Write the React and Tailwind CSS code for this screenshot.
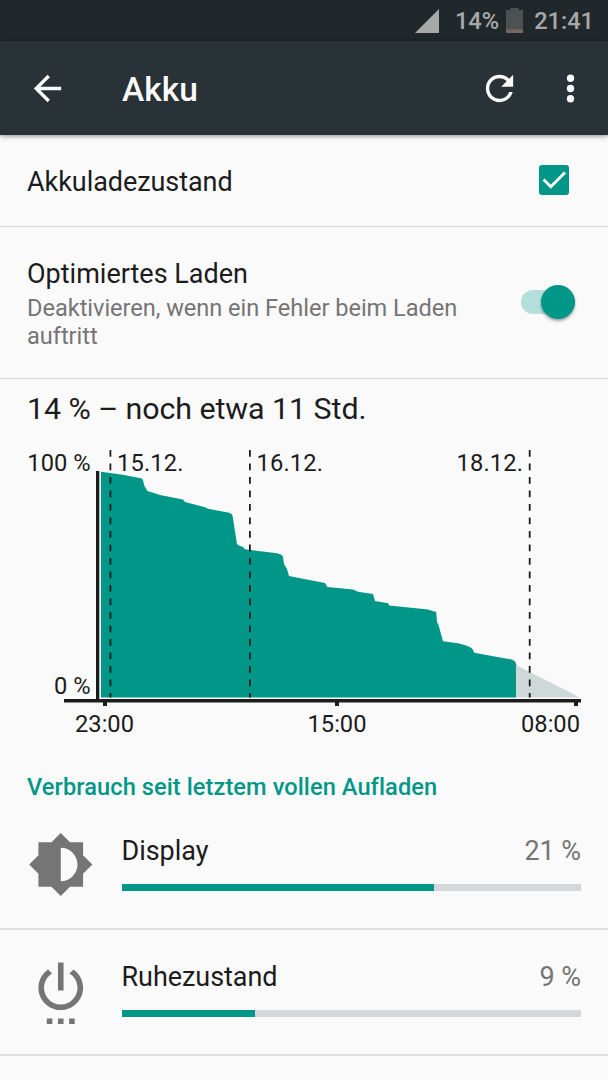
import React, { useState } from "react";

const GRAPH_LEVEL =
  "M101 697.4V471.8L121 474.5L141 478.3Q143.3 479 143.4 482L144.5 486L147.5 491L160 495L183 499.5L185 502L205 507.3L208 508.8L228 512.6Q232 513.6 232.6 516L237 544L239 545.5L243 547L245 549.3L277 553.3Q282.5 554.5 283 557L284 564L287 569L289 576L304 579L325 583L327.3 587L353 589.6L358 591.7L373 594L375 601L388.3 603.3L389 605.5L428 609.5L436.2 612L437 622L438.5 625L443 641.2L458 643.3Q471 646.5 472.5 649L474.3 652.7L500 657.5L511 659.3Q515 660.5 516 663.5V697.4Z";

const verbraucher = [
  {
    name: "Display",
    value: "21 %",
    width: 68,
    icon: "M20 15.31L23.31 12 20 8.69V4h-4.69L12 .69 8.69 4H4v4.69L.69 12 4 15.31V20h4.69L12 23.31 15.31 20H20v-4.69zM12 18V6c3.31 0 6 2.69 6 6s-2.69 6-6 6z",
  },
  {
    name: "Ruhezustand",
    value: "9 %",
    width: 29,
    icon: "M7 24h2v-2H7v2zm4 0h2v-2h-2v2zm2-22h-2v10h2V2zm3.56 2.44l-1.45 1.45C16.84 6.94 18 8.83 18 11c0 3.31-2.69 6-6 6s-6-2.69-6-6c0-2.17 1.16-4.06 2.88-5.12L7.44 4.44C5.36 5.88 4 8.28 4 11c0 4.42 3.58 8 8 8s8-3.58 8-8c0-2.72-1.36-5.12-3.44-6.56zM15 24h2v-2h-2v2z",
  },
];

const StatusBar = () => (
  <div className="flex h-[41px] items-center justify-end bg-[#21282b] pr-[14px] text-[23.6px] leading-[41px] font-medium text-[#a7a9a9]">
    <svg className="mr-[16px] h-6 w-6" viewBox="0 0 24 24" fill="currentColor">
      <path d="M24 0v24H0z" />
    </svg>
    <span className="pt-[2px]">14%</span>
    <svg className="mr-[11px] ml-[7px] h-[25px] w-[17px]" viewBox="0 0 17 25">
      <path d="M4.5 0h8v2H17v23H0V2h4.5z" fill="#4d5152" />
      <path d="M0 21.5h17V25H0z" fill="#756763" />
    </svg>
    <span className="pt-[2px]">21:41</span>
  </div>
);

const Toolbar = () => (
  <header className="relative flex h-[94px] items-center bg-[#283237] pl-[27px] text-[#fafafa] shadow-[0_1px_5px_rgba(0,0,0,0.45)]">
    <button className="mr-[54px]">
      <svg className="h-[41px] w-[41px]" viewBox="0 0 24 24" fill="currentColor">
        <path d="M20 11H7.83l5.59-5.59L12 4l-8 8 8 8 1.41-1.41L7.83 13H20v-2z" />
      </svg>
    </button>
    <h1 className="flex-1 pt-[3px] text-[33.5px] leading-10 font-medium">Akku</h1>
    <button className="mr-[30px]">
      <svg className="h-[41px] w-[41px]" viewBox="0 0 24 24" fill="currentColor">
        <path d="M17.65 6.35C16.2 4.9 14.21 4 12 4c-4.42 0-7.99 3.58-7.99 8s3.57 8 7.99 8c3.73 0 6.84-2.55 7.73-6h-2.08c-.82 2.33-3.04 4-5.65 4-3.31 0-6-2.69-6-6s2.69-6 6-6c1.66 0 3.14.69 4.22 1.78L13 11h7V4l-2.35 2.35z" />
      </svg>
    </button>
    <button className="mr-[17px]">
      <svg className="h-[41px] w-[41px]" viewBox="0 0 24 24" fill="currentColor">
        <circle cx="12" cy="6" r="2.15" />
        <circle cx="12" cy="12" r="2.15" />
        <circle cx="12" cy="18" r="2.15" />
      </svg>
    </button>
  </header>
);

// Akkuverlauf mit Prognose
const BatteryGraph = () => (
  <svg
    className="h-[304px] w-[608px]"
    viewBox="0 440 608 304"
    fontSize="23.7"
    fill="#1c1c1c"
  >
    <path d={GRAPH_LEVEL} fill="#009688" />
    <path d="M516 665L580 697.4H516Z" fill="#cfd8d8" />
    <circle cx="515.7" cy="664.7" r="1" fill="#8d7878" />
    <path d="M96 471h3.3v228H96zM64 699h517v3.4H64z" />
    <path d="M103 702h4v4h-4zM335 702h4v4h-4zM574 702h4v4h-4z" />
    <path
      d="M110.4 450V697.4M249.9 450V697.4M529.7 450V697.4"
      stroke="#1c1c1c"
      strokeWidth="1.8"
      strokeDasharray="6.8 6.7"
    />
    <text x="90.5" y="471" textAnchor="end">100 %</text>
    <text x="90.5" y="694" textAnchor="end">0 %</text>
    <text x="117" y="471" textLength="66.5">15.12.</text>
    <text x="256.5" y="471" textLength="66.5">16.12.</text>
    <text x="523" y="471" textAnchor="end" textLength="66.5">18.12.</text>
    <text x="104.5" y="732" textAnchor="middle">23:00</text>
    <text x="337" y="732" textAnchor="middle">15:00</text>
    <text x="580" y="732" textAnchor="end">08:00</text>
  </svg>
);

const UsageRow = ({ item }) => (
  <li className="flex h-[126px] items-start border-b-2 border-[#e0e0e0] pr-[27px] pl-[27px]">
    <svg className="mt-[27px] mr-[27px] h-[67px] w-[67.5px]" viewBox="0 0 24 24" fill="#757575">
      <path d={item.icon} />
    </svg>
    <div className="flex-1 pt-[31px]">
      <div className="flex justify-between text-[27px] leading-8 tracking-[-0.05px]">
        <span>{item.name}</span>
        <span className="text-[#757575]">{item.value}</span>
      </div>
      <div className="mt-[17px] h-[7px] bg-[#d6d7d8]">
        <div className="h-full bg-[#009688]" style={{ width: `${item.width}%` }} />
      </div>
    </div>
  </li>
);

const App = () => {
  const [showLevel, setShowLevel] = useState(true);
  const [optimized, setOptimized] = useState(true);

  return (
    <div className="h-[1080px] w-[608px] overflow-hidden bg-[#fafafa] font-['Roboto',sans-serif] text-[#1c1c1c]">
      <StatusBar />
      <Toolbar />

      <div className="flex h-[92px] items-center justify-between border-b border-[#d8d8d8] pr-[39px] pl-[27px]">
        <span className="pt-[2px] text-[27px] leading-8 tracking-[-0.06px]">Akkuladezustand</span>
        <button
          role="checkbox"
          aria-checked={showLevel}
          aria-label="Akkuladezustand"
          className="mb-[2px] h-[30px] w-[30px] rounded-[3px] bg-[#009688]"
          onClick={() => setShowLevel(!showLevel)}
        >
          {showLevel && (
            <svg viewBox="0 0 30 30" fill="none" stroke="#fff" strokeWidth="2.9">
              <path d="M4.6 14.5l7.2 7.2L26 7.5" />
            </svg>
          )}
        </button>
      </div>

      <div className="flex h-[152px] items-center justify-between border-b border-[#d8d8d8] pr-[33px] pl-[27px]">
        <div className="w-[460px] pt-[2px]">
          <p className="text-[27px] leading-8">Optimiertes Laden</p>
          <p className="mt-[4px] text-[23.6px] leading-7 tracking-[-0.04px] text-[#757575]">
            Deaktivieren, wenn ein Fehler beim Laden auftritt
          </p>
        </div>
        <button
          role="switch"
          aria-checked={optimized}
          aria-label="Optimiertes Laden"
          className="mb-[2px] flex h-6 w-[54px] items-center justify-end rounded-full bg-[#b5dfdb]"
          onClick={() => setOptimized(!optimized)}
        >
          <span className="h-[34px] w-[34px] shrink-0 rounded-full bg-[#009688] shadow-[0_2px_3px_rgba(0,0,0,0.35)]" />
        </button>
      </div>

      <section>
        <h2 className="h-[61px] pt-[12px] pl-[27px] text-[30.4px] leading-9 tracking-[-0.07px]">
          14 % – noch etwa 11 Std.
        </h2>
        <BatteryGraph />
      </section>

      <section>
        <h3 className="h-[60px] pt-[29px] pl-[27px] text-[23.6px] leading-7 font-medium tracking-[0.08px] text-[#009688]">
          Verbrauch seit letztem vollen Aufladen
        </h3>
        <ul>
          {verbraucher.map((item) => (
            <UsageRow key={item.name} item={item} />
          ))}
        </ul>
      </section>
    </div>
  );
};

export default App;
